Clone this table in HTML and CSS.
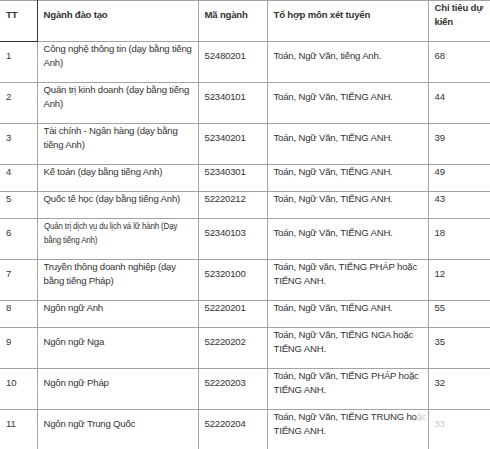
FILE: index.html
```html
<!DOCTYPE html>
<html>
<head>
<meta charset="utf-8">
<link rel="stylesheet" href="styles.css">
</head>
<body>
<table class="grid">
  <colgroup>
    <col class="c-tt">
    <col class="c-name">
    <col class="c-code">
    <col class="c-combo">
    <col class="c-quota">
  </colgroup>
  <thead>
    <tr>
      <th class="tt-head">TT</th>
      <th>Ngành đào tạo</th>
      <th>Mã ngành</th>
      <th>Tổ hợp môn xét tuyển</th>
      <th>Chỉ tiêu dự kiến</th>
    </tr>
  </thead>
  <tbody>
    <tr><td>1</td><td>Công nghệ thông tin (dạy bằng tiếng Anh)</td><td>52480201</td><td>Toán, Ngữ Văn, tiếng Anh.</td><td>68</td></tr>
    <tr><td>2</td><td>Quản trị kinh doanh (dạy bằng tiếng Anh)</td><td>52340101</td><td>Toán, Ngữ Văn, TIẾNG ANH.</td><td>44</td></tr>
    <tr><td>3</td><td>Tài chính - Ngân hàng (dạy bằng tiếng Anh)</td><td>52340201</td><td>Toán, Ngữ Văn, TIẾNG ANH.</td><td>39</td></tr>
    <tr><td>4</td><td>Kế toán (dạy bằng tiếng Anh)</td><td>52340301</td><td>Toán, Ngữ Văn, TIẾNG ANH.</td><td>49</td></tr>
    <tr><td>5</td><td>Quốc tế học (dạy bằng tiếng Anh)</td><td>52220212</td><td>Toán, Ngữ Văn, TIẾNG ANH.</td><td>43</td></tr>
    <tr><td>6</td><td><span class="narrow">Quản trị dịch vụ du lịch và lữ hành (Dạy<br>bằng tiếng Anh)</span></td><td>52340103</td><td>Toán, Ngữ Văn, TIẾNG ANH.</td><td>18</td></tr>
    <tr><td>7</td><td>Truyền thông doanh nghiệp (dạy bằng tiếng Pháp)</td><td>52320100</td><td>Toán, Ngữ văn, TIẾNG PHÁP hoặc TIẾNG ANH.</td><td>12</td></tr>
    <tr><td>8</td><td>Ngôn ngữ Anh</td><td>52220201</td><td>Toán, Ngữ Văn, TIẾNG ANH.</td><td>55</td></tr>
    <tr><td>9</td><td>Ngôn ngữ Nga</td><td>52220202</td><td>Toán, Ngữ Văn, TIẾNG NGA hoặc TIẾNG ANH.</td><td>35</td></tr>
    <tr><td>10</td><td>Ngôn ngữ Pháp</td><td>52220203</td><td>Toán, Ngữ Văn, TIẾNG PHÁP hoặc TIẾNG ANH.</td><td>32</td></tr>
    <tr><td>11</td><td>Ngôn ngữ Trung Quốc</td><td>52220204</td><td>Toán, Ngữ Văn, TIẾNG TRUNG ho<span class="faded">ặc</span> TIẾNG ANH.</td><td><span class="faded">33</span></td></tr>
  </tbody>
</table>
</body>
</html>
```

FILE: styles.css
```css
html, body {
  margin: 0;
  padding: 0;
  background: #fff;
  overflow: hidden;
}
body {
  font-family: "Liberation Sans", Arial, sans-serif;
  font-size: 9.6px;
  line-height: 14px;
  letter-spacing: -0.2px;
  color: #333;
}
.grid {
  border-collapse: collapse;
  table-layout: fixed;
  width: 494px;
}
.c-tt { width: 37px; }
.c-name { width: 161px; }
.c-code { width: 69px; }
.c-combo { width: 161px; }
.c-quota { width: 66px; }
.grid th,
.grid td {
  border: 1px solid #a3a3a3;
  padding: 0 1px 12px 6px;
  text-align: left;
  vertical-align: middle;
  overflow: visible;
}
.grid tr > :first-child {
  border-left: none;
}
.grid th {
  font-weight: bold;
}
.grid th:last-child {
  padding-right: 6px;
}
.grid th.tt-head {
  border-right: 1px solid #333;
  border-bottom: 1px solid #333;
}
.narrow {
  display: inline-block;
  white-space: nowrap;
  transform: scaleX(0.83);
  transform-origin: left center;
}
.faded {
  color: #c8c8c8;
}
```
